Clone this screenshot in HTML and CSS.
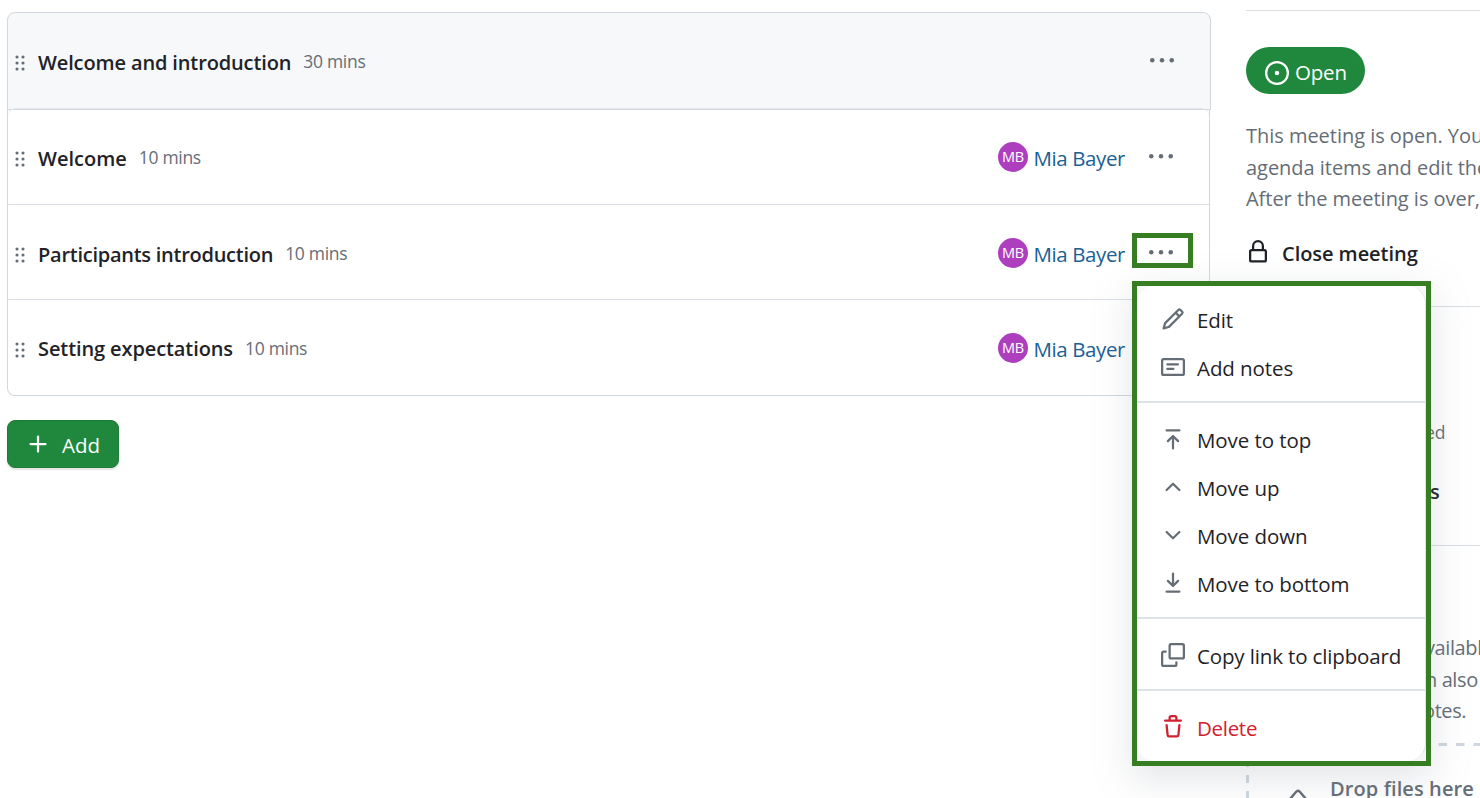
FILE: index.html
```html
<!DOCTYPE html>
<html lang="en">
<head>
<meta charset="utf-8">
<title>Meeting agenda</title>
<link rel="stylesheet" href="styles.css">
</head>
<body>
<svg class="defs" aria-hidden="true">
  <symbol id="grip" viewBox="0 0 16 16"><g fill="currentColor"><circle cx="6" cy="4" r="1.05"/><circle cx="10" cy="4" r="1.05"/><circle cx="6" cy="8" r="1.05"/><circle cx="10" cy="8" r="1.05"/><circle cx="6" cy="12" r="1.05"/><circle cx="10" cy="12" r="1.05"/></g></symbol>
  <symbol id="dots" viewBox="0 0 16 16"><g fill="currentColor"><circle cx="1.5" cy="7.5" r="1.5"/><circle cx="8" cy="7.5" r="1.5"/><circle cx="14.5" cy="7.5" r="1.5"/></g></symbol>
</svg>
<div class="page">
  <main class="agenda">
    <section class="list">
      <header class="row head">
        <svg class="icon grip"><use href="#grip"/></svg>
        <span class="title t1">Welcome and introduction</span><span class="mins">30 mins</span>
        <svg class="icon more"><use href="#dots"/></svg>
      </header>
      <div class="items">
        <div class="row r1">
          <svg class="icon grip"><use href="#grip"/></svg>
          <span class="title t2">Welcome</span><span class="mins">10 mins</span>
          <span class="avatar">MB</span><a class="user">Mia Bayer</a>
          <svg class="icon more"><use href="#dots"/></svg>
        </div>
        <div class="row r2">
          <svg class="icon grip"><use href="#grip"/></svg>
          <span class="title t3">Participants introduction</span><span class="mins">10 mins</span>
          <span class="avatar">MB</span><a class="user">Mia Bayer</a>
          <svg class="icon more"><use href="#dots"/></svg>
        </div>
        <div class="row r3">
          <svg class="icon grip"><use href="#grip"/></svg>
          <span class="title t4">Setting expectations</span><span class="mins">10 mins</span>
          <span class="avatar">MB</span><a class="user">Mia Bayer</a>
          <svg class="icon more"><use href="#dots"/></svg>
        </div>
      </div>
    </section>
    <button class="add"><svg class="icon" viewBox="0 0 16 16"><path class="line" d="M8 3v10M3 8h10"/></svg><span>Add</span></button>
  </main>
  <aside class="side">
    <section class="status">
      <div class="pill"><svg class="icon" viewBox="0 0 16 16"><circle class="line" cx="8" cy="8" r="7.25"/><circle cx="8" cy="8" r="1.5" fill="currentColor"/></svg><span>Open</span></div>
      <p class="note">This meeting is open. You<br>agenda items and edit the<br>After the meeting is over,</p>
      <div class="close"><svg class="icon" viewBox="0 0 16 16"><rect class="line" x="2.750" y="6.750" width="10.500" height="7.500" rx="1"/><path class="line" d="M4.750 6.500V4a3.250 3.250 0 0 1 6.500 0v2.500"/></svg><span>Close meeting</span></div>
    </section>
    <section class="people">
      <div class="invited">ed</div>
      <div class="parts">ts</div>
    </section>
    <section class="files">
      <p class="note tail"><span class="f1">vailabl</span><br><span class="f2">n also</span><br><span class="f3">otes.</span></p>
      <div class="drop">
        <svg class="dash" width="300" height="80"><path class="h" d="M0 1.500H300"/><path class="v" d="M1.500 0V80"/></svg>
        <svg class="clip" viewBox="0 0 16 16"><path class="line" d="M2 8 7 2.200a1.500 1.500 0 0 1 2 0L14 8"/></svg>
        <span>Drop files here</span>
      </div>
    </section>
  </aside>
</div>
<div class="mark"></div>
<div class="frame">
  <div class="menu">
    <div class="item"><svg class="icon" viewBox="0 0 16 16"><path fill="currentColor" fill-rule="evenodd" d="M11.013 1.427a1.75 1.75 0 0 1 2.474 0l1.086 1.086a1.75 1.75 0 0 1 0 2.474l-8.61 8.61c-.21.21-.47.364-.756.445l-3.251.93a.75.75 0 0 1-.927-.928l.929-3.25c.081-.286.235-.547.445-.758l8.61-8.61Zm.176 4.823L9.75 4.81l-6.286 6.287a.253.253 0 0 0-.064.108l-.558 1.953 1.953-.558a.253.253 0 0 0 .108-.064Zm1.238-3.763a.25.25 0 0 0-.354 0L10.811 3.75l1.439 1.44 1.263-1.263a.25.25 0 0 0 0-.354Z"/></svg><span>Edit</span></div>
    <div class="item"><svg class="icon" viewBox="0 0 16 16"><rect class="line" x=".75" y="2.75" width="14.5" height="10.5" rx="1"/><path class="line" d="M4.250 6.250h7M4.250 9.250h4"/></svg><span>Add notes</span></div>
    <hr>
    <div class="item"><svg class="icon" viewBox="0 0 16 16"><path class="line" d="M3.750 2.250h8.500M8 14.250V6M4.600 9.400 8 6l3.400 3.400"/></svg><span>Move to top</span></div>
    <div class="item"><svg class="icon" viewBox="0 0 16 16"><path class="line" d="M3.750 10 8 5.800 12.250 10"/></svg><span>Move up</span></div>
    <div class="item"><svg class="icon" viewBox="0 0 16 16"><path class="line" d="M3.750 6 8 10.200 12.250 6"/></svg><span>Move down</span></div>
    <div class="item"><svg class="icon" viewBox="0 0 16 16"><path class="line" d="M3.750 13.750h8.500M8 1.750V10M4.600 6.600 8 10l3.400-3.400"/></svg><span>Move to bottom</span></div>
    <hr>
    <div class="item"><svg class="icon" viewBox="0 0 16 16"><rect class="line" x="5.750" y=".75" width="9.500" height="9.500" rx="1"/><path class="line" d="M3.100 5.750H1.750a1 1 0 0 0-1 1v7.500a1 1 0 0 0 1 1h7.500a1 1 0 0 0 1-1V12.900"/></svg><span class="copy">Copy link to clipboard</span></div>
    <hr>
    <div class="item danger"><svg class="icon" viewBox="0 0 16 16"><path fill="currentColor" fill-rule="evenodd" d="M11 1.750V3h2.250a.75.75 0 0 1 0 1.500H2.750a.75.75 0 0 1 0-1.500H5V1.750C5 .784 5.784 0 6.750 0h2.500C10.216 0 11 .784 11 1.750ZM4.496 6.675l.66 6.600a.25.25 0 0 0 .249.225h5.190a.25.25 0 0 0 .249-.225l.66-6.600a.75.75 0 0 1 1.492.149l-.66 6.600A1.748 1.748 0 0 1 10.595 15h-5.190a1.750 1.750 0 0 1-1.741-1.575l-.66-6.600a.75.75 0 1 1 1.492-.15ZM6.500 1.750V3h3V1.750a.25.25 0 0 0-.25-.25h-2.500a.25.25 0 0 0-.25.25Z"/></svg><span>Delete</span></div>
  </div>
</div>
</body>
</html>
```
FILE: styles.css
```css
* { box-sizing: border-box; }
body { margin: 0; width: 1480px; height: 798px; overflow: hidden; position: relative; background: #fff; color: #1f2328; font: 20.5px/30px "Open Sans", "Noto Sans", sans-serif; white-space: nowrap; }
.defs { position: absolute; width: 0; height: 0; }
.icon { width: 24px; height: 24px; flex: none; display: block; }
.line { fill: none; stroke: currentColor; stroke-width: 1.5; stroke-linecap: round; stroke-linejoin: round; }
.page { display: flex; gap: 35px; height: 798px; overflow: hidden; padding-left: 7px; }
.agenda { width: 1204px; flex: none; padding-top: 12px; }
.row { display: flex; align-items: center; padding-right: 36px; }
.head { height: 98px; background: #f6f8fa; border: 1px solid #d0d7de; border-radius: 8px 8px 0 0; }
.items { position: relative; width: 1203px; border: 1px solid #d0d7de; border-top: 0; border-radius: 0 0 8px 8px; }
.items::before { content: ""; position: absolute; top: -2px; left: 0; right: 0; height: 8px; border: solid #e4e8ec; border-width: 1px 0 0; border-radius: 8px 8px 0 0; }
.r1 { height: 94px; }
.r2 { height: 95px; border-top: 1px solid #d8dee4; padding-top: 2px; }
.r3 { height: 96px; border-top: 1px solid #d8dee4; }
.grip { color: #656d76; margin-top: 3px; }
.r3 .grip { margin-top: 4px; }
.title { font-weight: 600; font-size: 20px; margin: 3px 0 0 6px; }
.t1 { letter-spacing: -.13px; }
.t2 { letter-spacing: 0; }
.t3 { letter-spacing: -.26px; }
.t4 { letter-spacing: -.1px; }
.mins { color: #656d76; font-size: 17.5px; margin-left: 12px; letter-spacing: -.3px; margin-right: auto; }
.avatar { width: 30px; height: 30px; border-radius: 50%; background: #ad3fbf; color: #fff; font-size: 14.5px; text-align: center; letter-spacing: -.2px; }
.user { color: #1a5f96; margin: 2px 24px 0 5.5px; letter-spacing: -.4px; }
.more { color: #656d76; }
.add { display: flex; align-items: center; gap: 12px; width: 112px; height: 48px; margin-top: 24px; padding: 0 0 0 18px; border: 1px solid #1f7d38; border-radius: 8px; background: #1f883d; color: #fff; font: inherit; box-shadow: 0 2px 2px rgba(31,35,40,.12); }
.add span { padding-top: 2px; }
.add .icon { margin-top: -1px; }
.side { width: 300px; flex: none; padding-top: 10px; }
.side section { border-top: 1px solid #d8dee4; }
.status { height: 296px; padding-top: 36px; }
.pill { display: flex; align-items: center; gap: 6px; width: 119px; height: 47px; border-radius: 24px; background: #1f883d; color: #fff; padding: 4px 0 0 19px; }
.pill span { margin-top: -2px; letter-spacing: -.2px; }
.note { margin: 26px 0 0; line-height: 31.5px; color: #656d76; font-size: 20px; letter-spacing: -.03px; }
.close { display: flex; align-items: center; gap: 12px; font-weight: 600; font-size: 20px; margin-top: 22px; letter-spacing: -.05px; }
.close span { margin-top: 2px; }
.close .icon { margin-top: -1px; }
.people { height: 239px; }
.invited { color: #656d76; font-size: 17.5px; margin: 110px 0 0 179px; }
.parts { font-weight: 600; font-size: 20px; margin: 30px 0 0 176px; }
.files .tail { margin-top: 86px; letter-spacing: -.4px; }
.f1 { margin-left: 179px; } .f2 { margin-left: 179px; } .f3 { margin-left: 177px; }
.drop { position: relative; margin-top: 16px; padding: 31px 0 0 84px; color: #656d76; font-weight: 600; font-size: 20px; letter-spacing: .1px; }
.dash { position: absolute; inset: 0 auto auto 0; }
.dash path { stroke: #d0d7de; stroke-width: 3; }
.h { stroke-dasharray: 8.500 9; }
.v { stroke-dasharray: 8 8; }
.clip { position: absolute; left: 39px; top: 45px; width: 26px; height: 26px; }
.mark { position: absolute; left: 1132px; top: 233px; width: 61px; height: 35px; border: 5px solid #377e22; }
.frame { position: absolute; left: 1132px; top: 281px; width: 299px; height: 485px; border: 5px solid #377e22; background: #f6f7f8; box-shadow: 0 12px 36px rgba(140,149,159,.25); }
.menu { height: 475px; padding-top: 9px; background: #fff; border-radius: 18px; border-right: 1px solid #e0e4e8; }
.item { display: flex; align-items: center; gap: 12px; height: 48px; padding-left: 24px; letter-spacing: -.08px; }
.item .icon { color: #656d76; }
.item span { padding-top: 2px; }
.item .copy { letter-spacing: -.14px; }
.menu hr { height: 2px; border: 0; margin: 10px 0 12px; background: #dde2e7; }
.item.danger, .danger .icon { color: #cf222e; }
.danger { letter-spacing: -.3px; }
```
